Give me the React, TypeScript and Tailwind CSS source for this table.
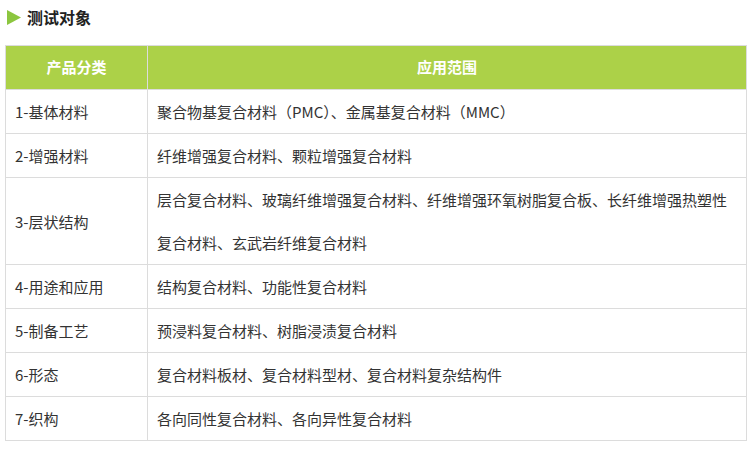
const rows: { cat: string; lines: string[] }[] = [
  { cat: "1-基体材料", lines: ["聚合物基复合材料（PMC）、金属基复合材料（MMC）"] },
  { cat: "2-增强材料", lines: ["纤维增强复合材料、颗粒增强复合材料"] },
  {
    cat: "3-层状结构",
    lines: [
      "层合复合材料、玻璃纤维增强复合材料、纤维增强环氧树脂复合板、长纤维增强热塑性",
      "复合材料、玄武岩纤维复合材料",
    ],
  },
  { cat: "4-用途和应用", lines: ["结构复合材料、功能性复合材料"] },
  { cat: "5-制备工艺", lines: ["预浸料复合材料、树脂浸渍复合材料"] },
  { cat: "6-形态", lines: ["复合材料板材、复合材料型材、复合材料复杂结构件"] },
  { cat: "7-织构", lines: ["各向同性复合材料、各向异性复合材料"] },
];

export default function App() {
  return (
    <div
      className="w-[756px] h-[452px] bg-white px-[5px] text-[#333]"
      style={{ fontFamily: '"Noto Sans CJK SC", "Noto Sans", sans-serif' }}
    >
      <div className="h-[34px] flex items-center gap-[6px] pl-[2px]">
        <svg width="14" height="15" viewBox="0 0 14 15">
          <polygon points="0,0 14,7.5 0,15" fill="#8cc63f" />
        </svg>
        <h2 className="m-0 text-[16px] font-bold text-[#222]">测试对象</h2>
      </div>
      <div className="h-[11px]" />
      <table className="w-[742px] border-collapse text-[15px] table-fixed">
        <colgroup>
          <col className="w-[142px]" />
          <col />
        </colgroup>
        <thead>
          <tr className="bg-[#acd148] text-white">
            <th className="border border-[#dcdcdc] h-[44px] font-bold text-center">产品分类</th>
            <th className="border border-[#dcdcdc] h-[44px] font-bold text-center">应用范围</th>
          </tr>
        </thead>
        <tbody>
          {rows.map((r) => (
            <tr key={r.cat}>
              <td className="border border-[#dcdcdc] pl-[9px] leading-[43px] align-middle">
                {r.cat}
              </td>
              <td className="border border-[#dcdcdc] pl-[9px] leading-[43px]">
                {r.lines.map((l) => (
                  <div key={l} className="whitespace-nowrap">
                    {l}
                  </div>
                ))}
              </td>
            </tr>
          ))}
        </tbody>
      </table>
    </div>
  );
}
